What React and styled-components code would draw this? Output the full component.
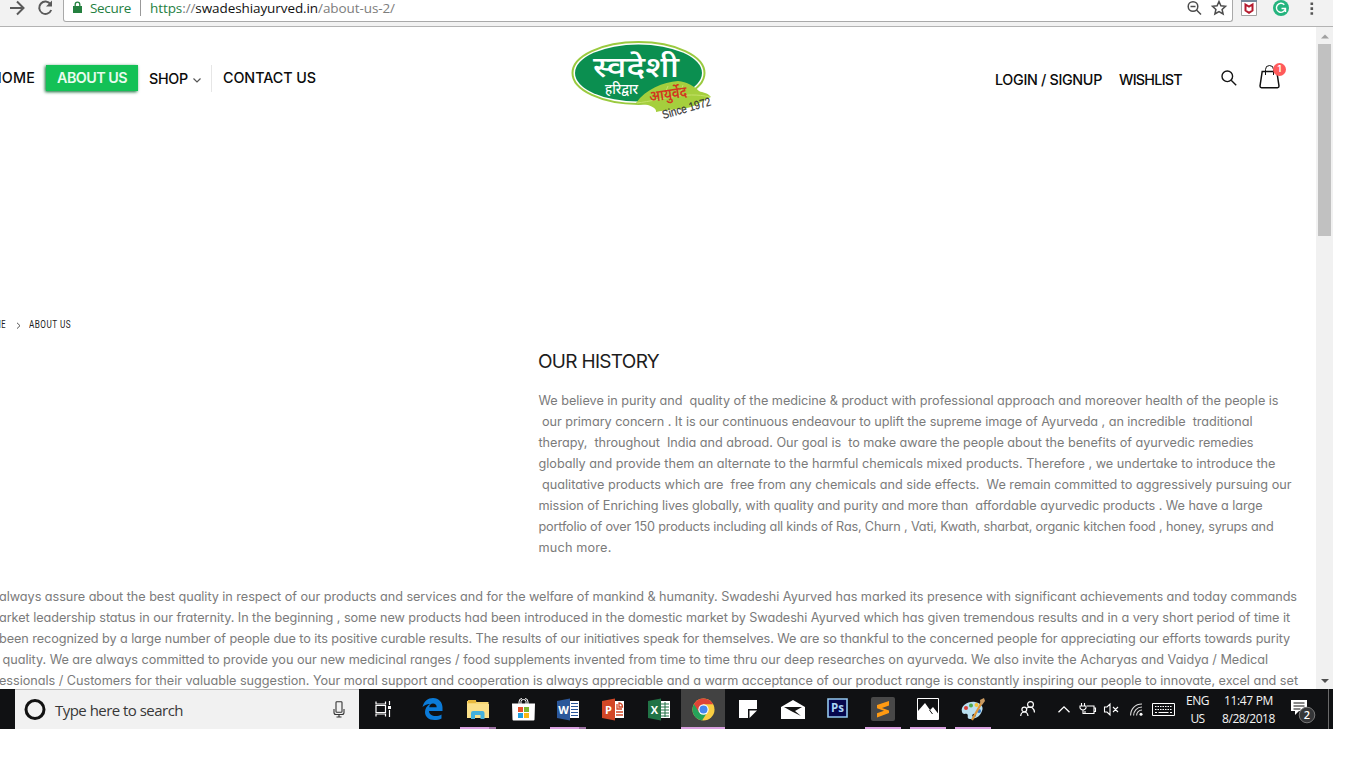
import React, { useLayoutEffect, useRef } from "react";
import styled, { createGlobalStyle } from "styled-components";

const Global = createGlobalStyle`
  * { box-sizing: border-box; }
  body { margin: 0; background: #fff; overflow: hidden; }
  svg { display: block; flex: none; overflow: visible; }
`;

const brand = `Inter, "Open Sans", sans-serif`;
const system = `"Open Sans", "Noto Sans", sans-serif`;

/* Text that fills a given width, either by tracking or by condensing. */
const FitBox = styled.span`
  display: block;
  flex: none;
  white-space: pre;
  width: ${(p) => p.$w}px;
`;
const FitInner = styled.span`
  display: inline-block;
  white-space: pre;
  transform-origin: 0 50%;
`;
function Fit({ w, squeeze, children }) {
  const ref = useRef(null);
  useLayoutEffect(() => {
    const el = ref.current;
    el.style.letterSpacing = squeeze ? "0.6px" : "0px";
    el.style.transform = "none";
    const natural = el.getBoundingClientRect().width;
    if (squeeze) el.style.transform = `scaleX(${w / natural})`;
    else el.style.letterSpacing = `${(w - natural) / el.textContent.length}px`;
  }, [w, squeeze, children]);
  return (
    <FitBox $w={w}>
      <FitInner ref={ref}>{children}</FitInner>
    </FitBox>
  );
}

const Screen = styled.div`
  width: 1333px;
  height: 729px;
  display: flex;
  flex-direction: column;
  overflow: hidden;
`;

/* ---- browser bar ---- */
const BrowserBar = styled.div`
  height: 27px;
  flex: none;
  display: flex;
  align-items: flex-start;
  background: #f2f2f2;
  border-bottom: 1px solid #b3b3b3;
  padding-left: 9px;
`;
const Address = styled.div`
  width: 1170px;
  height: 22px;
  margin-left: 8px;
  display: flex;
  align-items: flex-start;
  background: #fff;
  border: 1px solid #a9a9a9;
  border-top: 0;
  border-radius: 0 0 3px 3px;
  padding-left: 9px;
  font: 13.5px/17px ${system};
`;
const Secure = styled.div`
  color: #24803f;
  margin-left: 8px;
  width: 50px;
`;
const AddressRule = styled.div`
  width: 1px;
  height: 16px;
  background: #999;
`;
const Url = styled.div`
  color: #7d7d7d;
  margin-left: 9px;
  flex: 1;
  b { font-weight: 400; color: #111; }
  i { font-style: normal; color: #24803f; }
`;

/* ---- page ---- */
const Viewport = styled.div`
  height: 662px;
  flex: none;
  display: flex;
`;
const Page = styled.main`
  width: 1316px;
  overflow: hidden;
  font-family: ${brand};
  font-feature-settings: "cv11";
`;
const Header = styled.header`
  height: 103px;
  display: flex;
  align-items: flex-start;
`;
const NavItem = styled.a`
  flex: none;
  font-size: 14.3px;
  font-weight: 500;
  line-height: 20px;
  color: #0c0c0c;
  margin-left: ${(p) => p.$gap || 0}px;
  margin-top: ${(p) => p.$top}px;
`;
const ActiveItem = styled(NavItem)`
  height: 26px;
  line-height: 26px;
  padding: 0 11px 0 11px;
  font-weight: 600;
  color: #e9fbef;
  background: #13c156;
  box-shadow: -1px 1px 3px 0 #0f6b34;
`;
const Chevron = styled.div`
  margin: 51px 0 0 5px;
`;
const NavRule = styled.div`
  width: 1px;
  height: 27px;
  margin: 38px 0 0 10px;
  background: #e6e6e6;
`;
const Logo = styled.div`
  margin: 11px 0 0 252px;
`;
const SearchIcon = styled.div`
  margin: 43px 0 0 39px;
`;
const Cart = styled.div`
  margin: 38px 0 0 22px;
  position: relative;
`;
const Badge = styled.span`
  position: absolute;
  left: 14px;
  top: -2px;
  width: 13px;
  height: 13px;
  border-radius: 50%;
  background: #ff5a5a;
  color: #fff;
  font: 600 9px/12px ${brand};
  text-align: center;
`;
const Crumbs = styled.nav`
  margin-top: 188px;
  height: 14px;
  display: flex;
  gap: 8px;
  align-items: center;
  margin-left: -17px;
  font: 400 10.5px/14px Roboto, sans-serif;
  color: #1c1c1c;
`;
const Title = styled.h2`
  margin: 18px 0 0 538px;
  font-size: 19px;
  font-weight: 400;
  line-height: 24px;
  color: #1d1d1d;
`;
const Paragraph = styled.div`
  font-size: 12.7px;
  font-weight: 400;
  line-height: 21px;
  color: #7b7b7b;
  margin: ${(p) => p.$top}px 0 0 ${(p) => p.$left}px;
`;

const Scrollbar = styled.div`
  width: 17px;
  display: flex;
  flex-direction: column;
  align-items: center;
  background: #f1f1f1;
`;
const Arrow = styled.div`
  height: 17px;
  padding-top: 7px;
`;
const Thumb = styled.div`
  width: 13px;
  height: 192px;
  background: #c1c1c1;
  margin-bottom: auto;
`;

/* ---- taskbar ---- */
const Taskbar = styled.footer`
  height: 40px;
  flex: none;
  display: flex;
  background: #101113;
  padding-left: 15px;
`;
const Search = styled.div`
  width: 344px;
  display: flex;
  align-items: center;
  background: #f1f1f1;
  border-top: 1px solid #bdbdbd;
  padding: 0 14px 0 9px;
  gap: 9px;
  font: 15px/38px ${system};
  color: #383838;
`;
const Mic = styled.div`
  margin-left: auto;
`;
const Task = styled.div`
  width: ${(p) => p.$w || 45}px;
  flex: none;
  display: flex;
  align-items: center;
  justify-content: center;
  background: ${(p) => (p.$active ? "#424242" : "transparent")};
  box-shadow: ${(p) => (p.$active ? "inset 0 -2px #d9a0e0" : "none")};
`;
const Running = styled.div`
  width: 36px;
  height: 40px;
  display: flex;
  align-items: center;
  justify-content: center;
  border-bottom: 2px solid #d9a0e0;
  padding-top: 2px;
  border-image: ${(p) =>
    p.$many ? "linear-gradient(90deg, #d9a0e0 76%, #9d72a3 76%) 2" : "none"};
`;
const Tray = styled.div`
  width: ${(p) => p.$w}px;
  flex: none;
  display: flex;
  align-items: center;
  justify-content: center;
  margin-left: ${(p) => p.$gap || 0}px;
`;
const Clock = styled.div`
  width: ${(p) => p.$w}px;
  display: flex;
  flex-direction: column;
  align-items: center;
  padding-top: 3px;
  font: 12px/17.5px ${system};
  color: #f4f4f4;
`;
const Peek = styled.div`
  width: 1px;
  background: #6a6a6a;
  margin-left: 11px;
`;

const history = [
  [740, "We believe in purity and  quality of the medicine & product with professional approach and moreover health of the people is"],
  [714, " our primary concern . It is our continuous endeavour to uplift the supreme image of Ayurveda , an incredible  traditional"],
  [715, "therapy,  throughout  India and abroad. Our goal is  to make aware the people about the benefits of ayurvedic remedies"],
  [737, "globally and provide them an alternate to the harmful chemicals mixed products. Therefore , we undertake to introduce the"],
  [753, " qualitative products which are  free from any chemicals and side effects.  We remain committed to aggressively pursuing our"],
  [724, "mission of Enriching lives globally, with quality and purity and more than  affordable ayurvedic products . We have a large"],
  [735, "portfolio of over 150 products including all kinds of Ras, Churn , Vati, Kwath, sharbat, organic kitchen food , honey, syrups and"],
  [73, "much more."],
];
const story = [
  [1298, "always assure about the best quality in respect of our products and services and for the welfare of mankind & humanity. Swadeshi Ayurved has marked its presence with significant achievements and today commands"],
  [1291, "arket leadership status in our fraternity. In the beginning , some new products had been introduced in the domestic market by Swadeshi Ayurved which has given tremendous results and in a very short period of time it"],
  [1291, "been recognized by a large number of people due to its positive curable results. The results of our initiatives speak for themselves. We are so thankful to the concerned people for appreciating our efforts towards purity"],
  [1269, " quality. We are always committed to provide you our new medicinal ranges / food supplements invented from time to time thru our deep researches on ayurveda. We also invite the Acharyas and Vaidya / Medical"],
  [1299, "essionals / Customers for their valuable suggestion. Your moral support and cooperation is always appreciable and a warm acceptance of our product range is constantly inspiring our people to innovate, excel and set"],
];

const LogoArt = () => (
  <svg width="145" height="84" viewBox="0 0 145 84">
    <ellipse cx="70.500" cy="35" rx="66" ry="31" fill="#fff" stroke="#9aca3f" strokeWidth="2" />
    <ellipse cx="70.500" cy="35" rx="63.500" ry="28.500" fill="#0b8f50" />
    <path d="M68 65C78 51 95 44 110 43c9 1 16 5 21 10 4 2 8 1 12 6-9 3-15 11-31 12-9 1-14 1-24 3 1-4-6-8-20-9z" fill="#a5cf3d" />
    <path d="M69 65c25-3 48-12 73-6M96 58l4-10M112 56l3-9" fill="none" stroke="#c5e26a" strokeWidth="1" />
    <g fontFamily='"Noto Sans Devanagari", "Noto Sans", "Lohit Devanagari", sans-serif'>
      <text x="25" y="38.500" fontSize="29" fontWeight="500" fill="#fff" textLength="86" lengthAdjust="spacingAndGlyphs">स्वदेशी</text>
      <text x="37" y="56" fontSize="14" fontWeight="500" fill="#fff" textLength="33" lengthAdjust="spacingAndGlyphs">हरिद्वार</text>
      <text x="82" y="64" fontSize="15.500" fontWeight="600" fill="#d2381f" textLength="38" lengthAdjust="spacingAndGlyphs" transform="rotate(-8 82 64)">आयुर्वेद</text>
    </g>
    <text x="95.500" y="81" fontFamily='"Liberation Sans", sans-serif' fontSize="12" fill="#333" stroke="#333" strokeWidth=".2" textLength="50" lengthAdjust="spacingAndGlyphs" transform="rotate(-16 95.500 81)">Since 1972</text>
  </svg>
);

const Office = ({ color, letter, children }) => (
  <svg width="24" height="23" viewBox="0 0 24 23">
    <path d="M12 3h11v17H12z" fill="#fff" />
    {children}
    <path d="M1 3l13-2.500v22L1 20z" fill={color} />
    <text x="7.500" y="16" textAnchor="middle" fontFamily={system} fontWeight="700" fontSize="11" fill="#fff">{letter}</text>
  </svg>
);

export default function App() {
  return (
    <>
      <Global />
      <Screen>
        <BrowserBar>
          <svg width="46" height="20" viewBox="0 0 46 20" fill="none" stroke="#5a5a5a" strokeWidth="2">
            <path d="M1 8h13M8 1.500L14.500 8 8 14.500" />
            <path d="M41.500 4.200A6.200 6.200 0 1 0 42.200 10" />
            <path d="M43 .5v6h-6z" fill="#5a5a5a" stroke="none" />
          </svg>
          <Address>
            <svg width="9" height="14" viewBox="0 0 9 14">
              <path d="M2.200 7V4.500a2.300 2.300 0 0 1 4.600 0V7" fill="none" stroke="#24803f" strokeWidth="1.300" />
              <path d="M0 6h9v7H0z" fill="#24803f" />
            </svg>
            <Secure><Fit w={41}>Secure</Fit></Secure>
            <AddressRule />
            <Url><Fit w={245}><i>https</i>://<b>swadeshiayurved.in</b>/about-us-2/</Fit></Url>
            <svg width="44" height="18" viewBox="0 0 44 18" fill="none" stroke="#4c4c4c" strokeWidth="1.500">
              <circle cx="5" cy="6.500" r="4.800" />
              <path d="M2.500 6.500h5M8.500 10l4.500 4.500" />
              <path d="M31 1.500l1.900 4.300 4.600.5-3.400 3.100 1 4.600-4.100-2.400-4.100 2.400 1-4.600-3.400-3.100 4.600-.5z" />
            </svg>
          </Address>
          <svg width="90" height="20" viewBox="0 0 90 20">
            <path d="M8.500 0h15v15.500h-15z" fill="#fff" stroke="#a0a0a0" />
            <path d="M8 0h16v2H8z" fill="#75899b" />
            <path d="M12.500 4.500l3.500 2 3.500-2v6L16 12.800l-3.500-2.300z" fill="none" stroke="#b51b2e" strokeWidth="2" />
            <circle cx="48" cy="8" r="8" fill="#25b47e" />
            <path d="M51.300 4.800A4.500 4.500 0 1 0 52.400 8.500H48.500M52.500 8.500v3.500" fill="none" stroke="#fff" strokeWidth="1.400" />
            <path d="M77.500 2.500h2.600v2.600h-2.600zM77.500 7.300h2.600v2.600h-2.600zM77.500 12.200h2.600v2.600h-2.600z" fill="#555" />
          </svg>
        </BrowserBar>

        <Viewport>
          <Page>
            <Header>
              <NavItem $gap={-9} $top={41}><Fit w={44}>HOME</Fit></NavItem>
              <ActiveItem $gap={11} $top={38}><Fit w={70}>ABOUT US</Fit></ActiveItem>
              <NavItem $gap={11} $top={42}><Fit w={39}>SHOP</Fit></NavItem>
              <Chevron>
                <svg width="8" height="5" viewBox="0 0 8 5" fill="none" stroke="#555" strokeWidth="1.200"><path d="M.5.5L4 4 7.500.5" /></svg>
              </Chevron>
              <NavRule />
              <NavItem $gap={11} $top={41}><Fit w={93}>CONTACT US</Fit></NavItem>
              <Logo><LogoArt /></Logo>
              <NavItem $gap={282} $top={43}><Fit w={107}>LOGIN / SIGNUP</Fit></NavItem>
              <NavItem $gap={17} $top={43}><Fit w={63}>WISHLIST</Fit></NavItem>
              <SearchIcon>
                <svg width="16" height="16" viewBox="0 0 16 16" fill="none" stroke="#151515" strokeWidth="1.400"><circle cx="6.300" cy="6.300" r="5.300" /><path d="M10.200 10.200l5 5" /></svg>
              </SearchIcon>
              <Cart>
                <svg width="21" height="25" viewBox="0 0 21 25" fill="none" stroke="#111">
                  <path d="M3.200 6.500h14.600l2.200 14.500q0 1.700-1.500 1.700h-16q-1.500 0-1.500-1.700z" strokeWidth="1.500" />
                  <path d="M6.500 10V4.500q0-4 4-4t4 4V10" strokeWidth="1" />
                </svg>
                <Badge>1</Badge>
              </Cart>
            </Header>

            <Crumbs>
              <Fit w={23} squeeze>HOME</Fit>
              <svg width="7" height="7" viewBox="0 0 7 7" fill="none" stroke="#555"><path d="M3 .8L6 3.700 3 6.600" /></svg>
              <Fit w={42} squeeze>ABOUT US</Fit>
            </Crumbs>

            <Title><Fit w={121}>OUR HISTORY</Fit></Title>
            <Paragraph $top={16} $left={538.5}>
              {history.map(([w, text]) => <Fit key={text} w={w}>{text}</Fit>)}
            </Paragraph>
            <Paragraph $top={28} $left={-1}>
              {story.map(([w, text]) => <Fit key={text} w={w}>{text}</Fit>)}
            </Paragraph>
          </Page>
          <Scrollbar>
            <Arrow><svg width="8" height="5" viewBox="0 0 8 5"><path d="M0 4.500L4 .5l4 4z" fill="#a0a0a0" /></svg></Arrow>
            <Thumb />
            <Arrow><svg width="8" height="5" viewBox="0 0 8 5"><path d="M0 0l4 4 4-4z" fill="#505050" /></svg></Arrow>
          </Scrollbar>
        </Viewport>

        <Taskbar>
          <Search>
            <svg width="22" height="22" viewBox="0 0 22 22"><circle cx="11" cy="10.500" r="9" fill="none" stroke="#111" strokeWidth="3" /></svg>
            <Fit w={128}>Type here to search</Fit>
            <Mic>
              <svg width="12" height="17" viewBox="0 0 12 17" fill="none" stroke="#333" strokeWidth="1.100">
                <rect x="3" y=".7" width="6" height="10.500" rx=".8" /><path d="M1 8v3.500q0 2 2 2h6q2 0 2-2V8M6 13.500v2.500M3.500 16h5" />
              </svg>
            </Mic>
          </Search>
          <Task $w={48}>
            <svg width="17" height="16" viewBox="0 0 17 16" fill="none" stroke="#fff" strokeWidth="1.200">
              <path d="M1 .5v2.500h9.500V.5M1 15.500V13h9.500v2.500M1 4.500h9.500v7H1zM14.500 0v4M14.500 9v7" /><path d="M13 5h3v3h-3z" fill="#fff" stroke="none" />
            </svg>
          </Task>
          <Task $w={50}>
            <svg width="21" height="22" viewBox="0 0 21 22">
              <path d="M.5 9C2 3 6 0 11 0c6 0 9.500 4.500 9.500 9.500V13H7c.2 3.500 3 5 6.500 5 2.300 0 4.300-.6 6-1.600v4.100C17.500 21.500 15 22 12.500 22 6.500 22 3 18.500 3 14c0-3.500 2-6.500 5-8C4.500 6 2 7.500.5 9zM7.200 9.200h7.500C14.700 6.800 13 5.500 11 5.500S7.500 7 7.200 9.200z" fill="#0b7bd8" />
            </svg>
          </Task>
          <Task $w={42}>
            <Running $many>
              <svg width="22" height="19" viewBox="0 0 22 19">
                <path d="M0 1h8l2 1h11.500v16H0z" fill="#f7d774" /><path d="M1 0h8v3H1z" fill="#e8b93e" /><path d="M0 4h22v14H0z" fill="#fbe08a" />
                <path d="M4 19v-6q0-2 2-2h9.500q2 0 2 2v6h-4v-4H8v4z" fill="#45b1dd" />
              </svg>
            </Running>
          </Task>
          <Task $w={48}>
            <svg width="23" height="23" viewBox="0 0 23 23">
              <path d="M7 6V4q0-3.500 3-3.500M16 6V4q0-3.500-3-3.500M9 6V3.500q0-2 2.500-2t2.500 2V6" fill="none" stroke="#fff" />
              <path d="M0 5.500h23l-.5 16q0 1-1 1h-20q-1 0-1-1z" fill="#fff" />
              <path d="M6 9h5v5H6z" fill="#e8502b" /><path d="M12 9h5v5h-5z" fill="#7db72f" /><path d="M6 15h5v5H6z" fill="#1f9fe0" /><path d="M12 15h5v5h-5z" fill="#fbb813" />
            </svg>
          </Task>
          <Task $w={42}>
            <Running $many>
              <Office color="#2b579a" letter="W"><path d="M15 5.500h7M15 8.500h7M15 11.500h7M15 14.500h7M15 17.500h7" stroke="#2b579a" /></Office>
            </Running>
          </Task>
          <Task $w={47}>
            <Office color="#d24726" letter="P"><path d="M16 6v5h5M18 5a4 4 0 0 1 3.500 4H18zM15 14h7M15 17h7" stroke="#d24726" fill="none" strokeWidth="1.300" /></Office>
          </Task>
          <Task $w={45}>
            <Office color="#217346" letter="X"><path d="M14 6h8M14 9h8M14 12h8M14 15h8M14 18h8M18 4v15" stroke="#217346" /></Office>
          </Task>
          <Task $w={44} $active>
            <svg width="23" height="23" viewBox="0 0 24 24">
              <circle cx="12" cy="12" r="11.500" fill="#f9cd41" />
              <path d="M12 12L2 6.300A11.500 11.500 0 0 0 10.500 23.400L16.500 14z" fill="#26a35a" />
              <path d="M12 6.500h10.100A11.500 11.500 0 0 0 2 6.300L7.500 15z" fill="#df4437" />
              <circle cx="12" cy="12" r="5.400" fill="#fff" /><circle cx="12" cy="12" r="4.200" fill="#4687ef" />
            </svg>
          </Task>
          <Task $w={46}>
            <svg width="18" height="18" viewBox="0 0 18 18"><path d="M0 0h18v9H9v9H0z" fill="#fff" /><path d="M10.500 18v-7.500H18z" fill="#fff" /></svg>
          </Task>
          <Task $w={44}>
            <svg width="24" height="19" viewBox="0 0 24 19"><path d="M0 7L12 0l12 7v12H0z" fill="#fff" /><path d="M3 7h18l-7 4 6 5-10-5z" fill="#151515" /></svg>
          </Task>
          <Task $w={45}>
            <svg width="21" height="23" viewBox="0 0 21 23">
              <path d="M1 1h19v18H1z" fill="#05064d" stroke="#93c7ee" strokeWidth="1.600" />
              <text x="10.500" y="14" textAnchor="middle" fontFamily={system} fontWeight="700" fontSize="11.500" fill="#a9d4f4">Ps</text>
            </svg>
          </Task>
          <Task>
            <Running>
              <svg width="24" height="24" viewBox="0 0 24 24"><rect width="24" height="24" rx="2" fill="#484848" /><path d="M18 4v4.500l-7 2.500 7 2.500V16l-12 4.500v-4.300l7-2.500-7-2.400V8z" fill="#ff9a12" /></svg>
            </Running>
          </Task>
          <Task>
            <Running>
              <svg width="22" height="22" viewBox="0 0 22 22"><path d="M.5.5h21v21H.5z" fill="none" stroke="#fff" /><path d="M1 21V13l7-8 5 7 3-3 5.500 7v5z" fill="#fff" /><path d="M12.500 12l3 4" stroke="#111" /></svg>
            </Running>
          </Task>
          <Task>
            <Running>
              <svg width="24" height="23" viewBox="0 0 24 23">
                <path d="M1 14C-1 8 7 3 14 4c6 1 9 5 7 9-2 6-7 8-12 8-4 0-1-4-3-5-2-.6-4 1-5-2z" fill="#b9dff0" />
                <circle cx="5" cy="10" r="2" fill="#d83b34" /><circle cx="10" cy="7.500" r="2" fill="#4caa4d" /><circle cx="15.500" cy="7" r="2" fill="#f4c338" /><circle cx="18" cy="13" r="2" fill="#3478c7" /><circle cx="13" cy="17.500" r="1.700" fill="#222" />
                <path d="M11 22L21 4" stroke="#df9638" strokeWidth="2.200" /><path d="M19.500 6L19 2l4-2 1 3-3 4z" fill="#c99a61" />
              </svg>
            </Running>
          </Task>

          <Tray $w={50} $gap={7}>
            <svg width="15" height="16" viewBox="0 0 15 16" fill="none" stroke="#fff" strokeWidth="1.200"><circle cx="10.500" cy="3.500" r="2.900" /><circle cx="4.300" cy="8.500" r="2.400" /><path d="M.7 15q.3-4 3.600-4t3.700 4M7 7q3.500-2 5.500 0 1.800 1.500 2 4.500" /></svg>
          </Tray>
          <Tray $w={22} $gap={1}><svg width="12" height="7" viewBox="0 0 12 7" fill="none" stroke="#fff" strokeWidth="1.300"><path d="M.5 6.300L6 .8l5.500 5.500" /></svg></Tray>
          <Tray $w={26}><svg width="16" height="12" viewBox="0 0 16 12" fill="none" stroke="#fff" strokeWidth="1.100"><path d="M7 3h7v7.500H5V8M14 5h1.500v3.500H14M1.500 0v2.500M4.500 0v2.500M0 3h6v2Q5 7 3 7T0 5zM3 7v3.500h2" /></svg></Tray>
          <Tray $w={20}><svg width="15" height="13" viewBox="0 0 15 13" fill="none" stroke="#fff" strokeWidth="1.100"><path d="M.5 4h2.500L6 1v11L3 9H.5zM9 4l5 5M14 4L9 9" /></svg></Tray>
          <Tray $w={31}><svg width="13" height="13" viewBox="0 0 13 13" fill="none" stroke="#ddd" strokeWidth="1.100"><path d="M.6 12.500C.6 6 5 1 12 1M3.600 12.500C3.600 8 7 4 12 4M6.600 12.500C6.600 9.500 9 7 12 7" /><circle cx="11" cy="11.200" r="1.500" fill="#fff" stroke="none" /></svg></Tray>
          <Tray $w={23}><svg width="23" height="13" viewBox="0 0 23 13" fill="none" stroke="#fff"><path d="M.5.5h22v12H.5z" /><path d="M3 3.500h17M3 6.500h17" strokeDasharray="1.500 1" /><path d="M3 9.500h2M6.500 9.500h10M18 9.500h2" /></svg></Tray>
          <Clock $w={45}><Fit w={23}>ENG</Fit><Fit w={14}>US</Fit></Clock>
          <Clock $w={57}><Fit w={49}>11:47 PM</Fit><Fit w={53}>8/28/2018</Fit></Clock>
          <Tray $w={26} $gap={14}>
            <svg width="26" height="22" viewBox="0 0 26 22">
              <path d="M0 2h16v11H8l-4 4v-4H0z" fill="#fff" /><path d="M2.500 5h11M2.500 8h11M2.500 11h7" stroke="#111" />
              <circle cx="16" cy="17" r="7.800" fill="#353638" stroke="#777" />
              <text x="16" y="21" textAnchor="middle" fontFamily={system} fontWeight="600" fontSize="11" fill="#fff">2</text>
            </svg>
          </Tray>
          <Peek />
        </Taskbar>
      </Screen>
    </>
  );
}
